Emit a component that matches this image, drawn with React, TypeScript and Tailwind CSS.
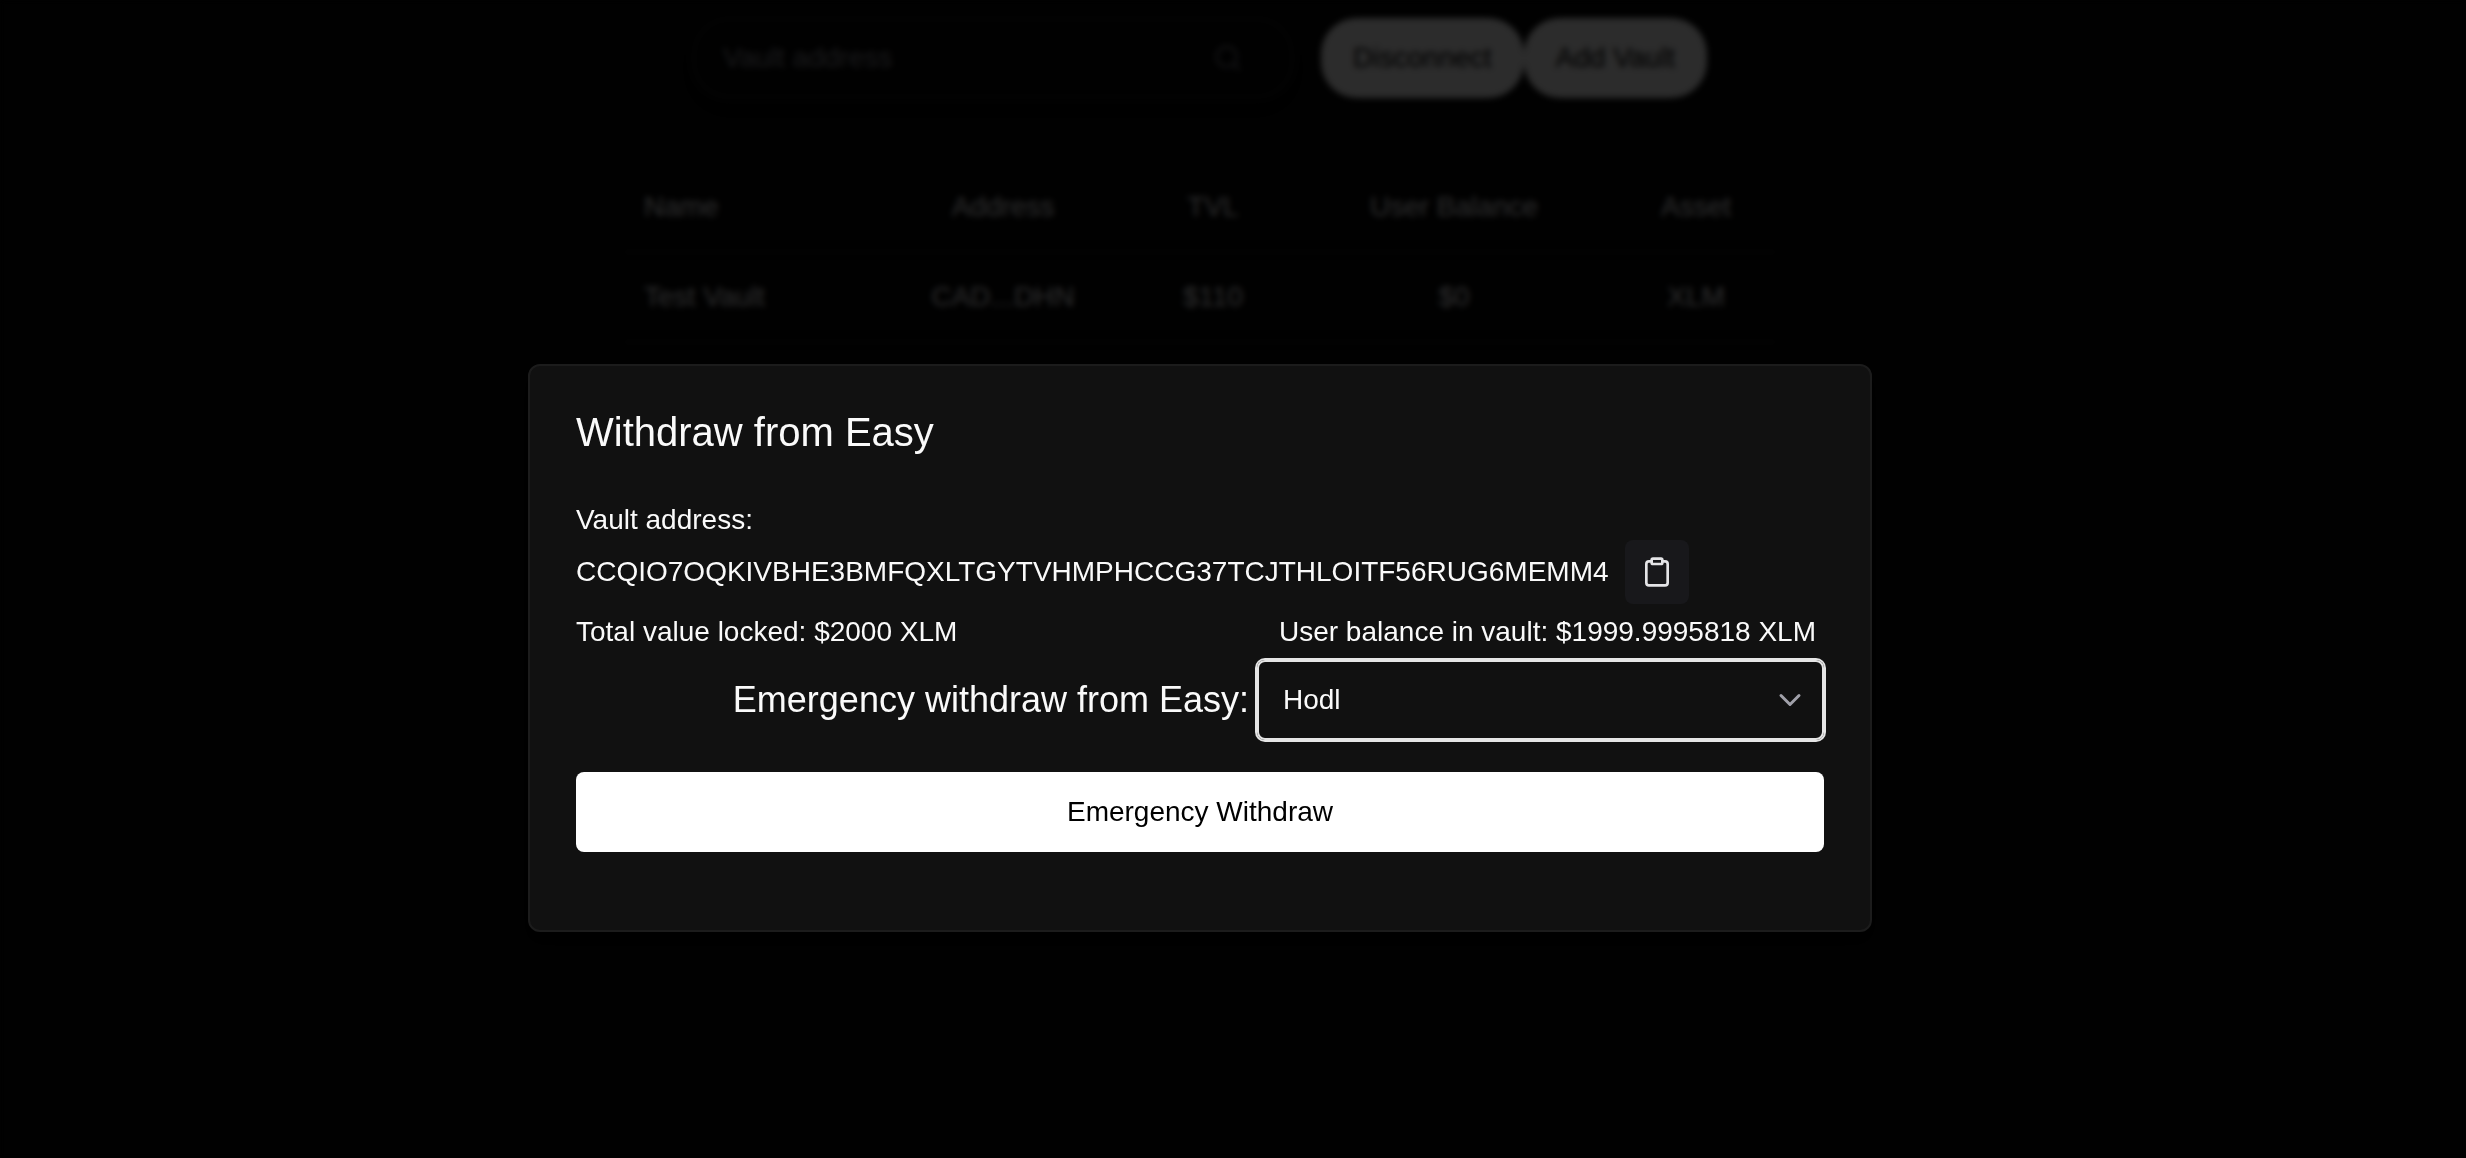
import { ChevronDown, Clipboard, Search } from "lucide-react";

const vaults = [
  { name: "Test Vault", address: "CAD...DHN", tvl: "$110", balance: "$0", asset: "XLM" },
];

function VaultsPage() {
  return (
    <div className="flex flex-col items-center pt-[18px] pr-[66px]">
      <div className="flex items-center gap-7">
        <div className="flex h-20 w-[600px] items-center rounded-[36px] border-2 border-[#222222] pr-12 pl-7 shadow-lg">
          <input
            type="text"
            aria-label="Vault address"
            placeholder="Vault address"
            className="min-w-0 flex-1 bg-transparent outline-none placeholder:text-[#85858d]"
          />
          <button type="button" aria-label="Search" className="text-[#66666e]">
            <Search size={30} />
          </button>
        </div>
        <div className="flex">
          <button type="button" className="h-20 rounded-[36px] bg-[#dadada] px-8 text-black">
            Disconnect
          </button>
          <button type="button" className="h-20 rounded-[36px] bg-[#dadada] px-8 text-black">
            Add Vault
          </button>
        </div>
      </div>

      <table className="mt-16 w-full max-w-[1152px] table-fixed text-center text-[#e4e4e7]">
        <colgroup>
          <col className="w-[248px]" />
          <col className="w-[262px]" />
          <col className="w-[158px]" />
          <col className="w-[324px]" />
          <col className="w-[160px]" />
        </colgroup>
        <thead>
          <tr className="h-[90px] border-b-2 border-[#222222]">
            <th scope="col" className="pl-5 text-left font-normal">Name</th>
            <th scope="col" className="font-normal">Address</th>
            <th scope="col" className="font-normal">TVL</th>
            <th scope="col" className="font-normal">User Balance</th>
            <th scope="col" className="font-normal">Asset</th>
          </tr>
        </thead>
        <tbody>
          {vaults.map((v) => (
            <tr key={v.name} className="h-[90px] border-b-2 border-[#222222]">
              <td className="pl-5 text-left">{v.name}</td>
              <td>{v.address}</td>
              <td>{v.tvl}</td>
              <td>{v.balance}</td>
              <td>{v.asset}</td>
            </tr>
          ))}
        </tbody>
      </table>
    </div>
  );
}

function WithdrawDialog() {
  return (
    <div
      role="dialog"
      aria-modal="true"
      aria-labelledby="dialog-title"
      className="w-full max-w-[1344px] rounded-xl border-2 border-[#1c1c1c] bg-[#111111] px-[46px] pt-9 pb-[78px] text-[#fafafa] shadow-lg"
    >
      <h2 id="dialog-title" className="text-[40px] leading-[60px]">
        Withdraw from Easy
      </h2>

      <p className="mt-[38px]">Vault address:</p>
      <div className="flex items-center gap-4">
        <p>CCQIO7OQKIVBHE3BMFQXLTGYTVHMPHCCG37TCJTHLOITF56RUG6MEMM4</p>
        <button
          type="button"
          aria-label="Copy vault address"
          className="flex size-16 items-center justify-center rounded-lg bg-[#18181b] text-[#e4e4e7]"
        >
          <Clipboard size={32} />
        </button>
      </div>

      <div className="mt-2 flex justify-between pr-2">
        <p>Total value locked: $2000 XLM</p>
        <p>User balance in vault: $1999.9995818 XLM</p>
      </div>

      <div className="mt-2 flex items-center justify-end gap-2">
        <label htmlFor="strategy" className="text-[36px] leading-[54px]">
          Emergency withdraw from Easy:
        </label>
        <div className="relative w-[567px]">
          <select
            id="strategy"
            className="h-20 w-full appearance-none rounded-lg border-2 border-[#e5e5e5] bg-transparent px-6 ring-2 ring-[#e5e5e5] outline-none"
          >
            <option>Hodl</option>
          </select>
          <ChevronDown
            size={36}
            className="pointer-events-none absolute inset-y-0 right-4 my-auto text-[#a1a1aa]"
          />
        </div>
      </div>

      <button type="button" className="mt-8 h-20 w-full rounded-lg bg-white text-black">
        Emergency Withdraw
      </button>
    </div>
  );
}

export default function App() {
  return (
    <div className="min-h-screen bg-[#050505] font-['Liberation_Sans',Arial,sans-serif] text-[28px] leading-10">
      <VaultsPage />
      <div className="fixed inset-0 flex items-start justify-center overflow-hidden bg-black/80 pt-[364px] pr-[66px] backdrop-blur-[3px]">
        <WithdrawDialog />
      </div>
    </div>
  );
}
